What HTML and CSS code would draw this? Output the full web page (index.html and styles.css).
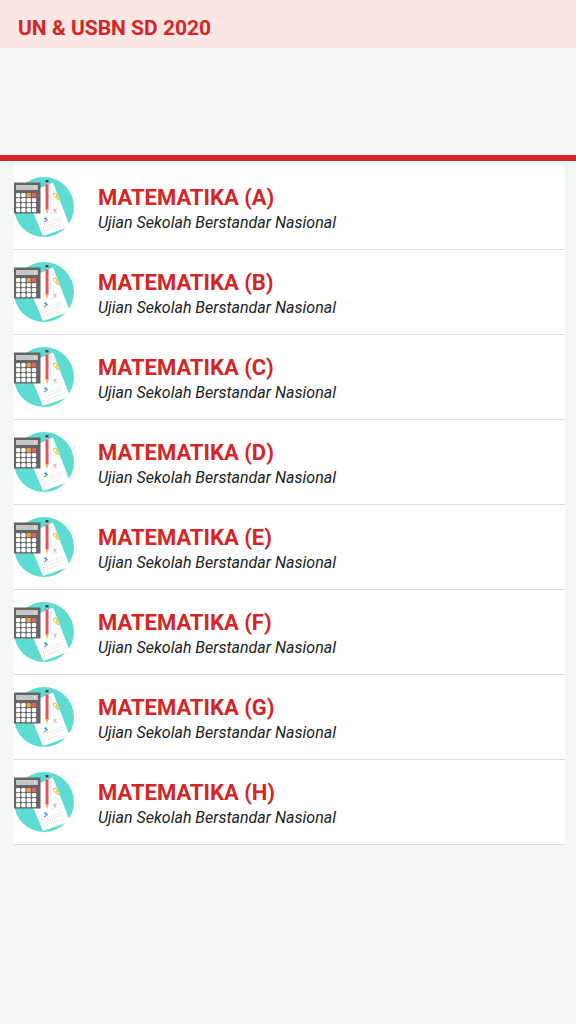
FILE: index.html
```html
<!DOCTYPE html>
<html lang="id">
<head>
<meta charset="utf-8">
<meta name="viewport" content="width=device-width, initial-scale=1">
<title>UN &amp; USBN SD 2020</title>
<link rel="stylesheet" href="styles.css">
</head>
<body>
<svg class="sprite" aria-hidden="true">
  <symbol id="math" viewBox="0 0 60 60">
    <circle cx="30" cy="30" r="30" fill="#5fdcd2"/>
    <path d="M19 17 26 11 31 9 39 5.500 56 49.500 29 59 19 35Z" fill="#fcfefe"/>
    <path d="M0 5.500h26.500v31H0z" fill="#636567"/>
    <path d="M2 8h22v5H2z" fill="#c3c5c6"/>
    <path d="M21 9v3" stroke="#f2f2f2"/>
    <g fill="#fff">
      <rect x="2" y="16" width="4.300" height="4.200" rx="1.300"/><rect x="7.300" y="16" width="4.300" height="4.200" rx="1.300"/>
      <rect x="12.600" y="16" width="4.300" height="4.200" rx="1.300" fill="#e5a93c"/><rect x="17.900" y="16" width="4.300" height="4.200" rx="1.300" fill="#e9625c"/>
      <rect x="2" y="21" width="4.300" height="4.200" rx="1.300"/><rect x="7.300" y="21" width="4.300" height="4.200" rx="1.300"/><rect x="12.600" y="21" width="4.300" height="4.200" rx="1.300"/><rect x="17.900" y="21" width="4.300" height="4.200" rx="1.300"/>
      <rect x="2" y="26" width="4.300" height="4.200" rx="1.300"/><rect x="7.300" y="26" width="4.300" height="4.200" rx="1.300"/><rect x="12.600" y="26" width="4.300" height="4.200" rx="1.300"/><rect x="17.900" y="26" width="4.300" height="4.200" rx="1.300"/>
      <rect x="2" y="31" width="4.300" height="4.200" rx="1.300"/><rect x="7.300" y="31" width="4.300" height="4.200" rx="1.300"/><rect x="12.600" y="31" width="4.300" height="4.200" rx="1.300"/><rect x="17.900" y="31" width="4.300" height="4.200" rx="1.300"/>
    </g>
    <path d="M31.500 6.500h3v26h-3z" fill="#e9525c"/>
    <path d="M31.500 5.500h3v2h-3z" fill="#a9cdd6"/>
    <path d="M31.500 3h3v2.500h-3z" fill="#3c4654"/>
    <path d="M31.500 32h3L33 37.500z" fill="#f3b34a"/>
    <g fill="none" stroke-width="1">
      <path d="M39 17l3-1 1 3 3 1-1 3-3-2-2-2zM42 19l3 4" stroke="#efc03c"/>
      <path d="M40 35l1-3 1 4M39 33l4-1" stroke="#f0b3bd"/>
      <path d="M30 41l4 2M32 40v4l-2 1" stroke="#36929e"/>
      <path d="M37 37l6-2M28 48l20-8M29 51l19-8M30 54l15-6" stroke="#d3bcc0" stroke-width=".8" stroke-dasharray="1 1.500"/>
    </g>
  </symbol>
</svg>
<header class="header"><h1 class="header-title">UN &amp; USBN SD 2020</h1></header>
<div class="banner"></div>
<main class="content">
  <ul class="list">
    <li class="item"><svg class="icon" aria-hidden="true"><use href="#math"/></svg><div class="text"><h2 class="title">MATEMATIKA (A)</h2><p class="subtitle">Ujian Sekolah Berstandar Nasional</p></div></li>
    <li class="item"><svg class="icon" aria-hidden="true"><use href="#math"/></svg><div class="text"><h2 class="title">MATEMATIKA (B)</h2><p class="subtitle">Ujian Sekolah Berstandar Nasional</p></div></li>
    <li class="item"><svg class="icon" aria-hidden="true"><use href="#math"/></svg><div class="text"><h2 class="title">MATEMATIKA (C)</h2><p class="subtitle">Ujian Sekolah Berstandar Nasional</p></div></li>
    <li class="item"><svg class="icon" aria-hidden="true"><use href="#math"/></svg><div class="text"><h2 class="title">MATEMATIKA (D)</h2><p class="subtitle">Ujian Sekolah Berstandar Nasional</p></div></li>
    <li class="item"><svg class="icon" aria-hidden="true"><use href="#math"/></svg><div class="text"><h2 class="title">MATEMATIKA (E)</h2><p class="subtitle">Ujian Sekolah Berstandar Nasional</p></div></li>
    <li class="item"><svg class="icon" aria-hidden="true"><use href="#math"/></svg><div class="text"><h2 class="title">MATEMATIKA (F)</h2><p class="subtitle">Ujian Sekolah Berstandar Nasional</p></div></li>
    <li class="item"><svg class="icon" aria-hidden="true"><use href="#math"/></svg><div class="text"><h2 class="title">MATEMATIKA (G)</h2><p class="subtitle">Ujian Sekolah Berstandar Nasional</p></div></li>
    <li class="item"><svg class="icon" aria-hidden="true"><use href="#math"/></svg><div class="text"><h2 class="title">MATEMATIKA (H)</h2><p class="subtitle">Ujian Sekolah Berstandar Nasional</p></div></li>
  </ul>
</main>
</body>
</html>
```
FILE: styles.css
```css
* { box-sizing: border-box; margin: 0; padding: 0; }
body { background: #f3f7f8; font-family: Roboto, sans-serif; color: #222; }
.sprite { display: none; }
.header { background: #fce7e5; padding: 16px 18px 8px; }
.header-title { font-size: 21px; line-height: 24px; font-weight: 700; color: #d32626; }
.banner { height: 107px; }
.content { border-top: 6px solid #d72628; padding: 4px 11px 0 14px; }
.list { list-style: none; background: #fff; }
.item { display: flex; align-items: center; gap: 24px; padding: 12px 0; border-bottom: 1px solid #d9dbdc; }
.icon { width: 60px; height: 60px; flex: none; }
.text { padding-top: 4px; }
.title { font-size: 22px; line-height: 28px; font-weight: 700; color: #d32626; }
.subtitle { font-size: 16px; line-height: 22px; font-style: italic; }
```
